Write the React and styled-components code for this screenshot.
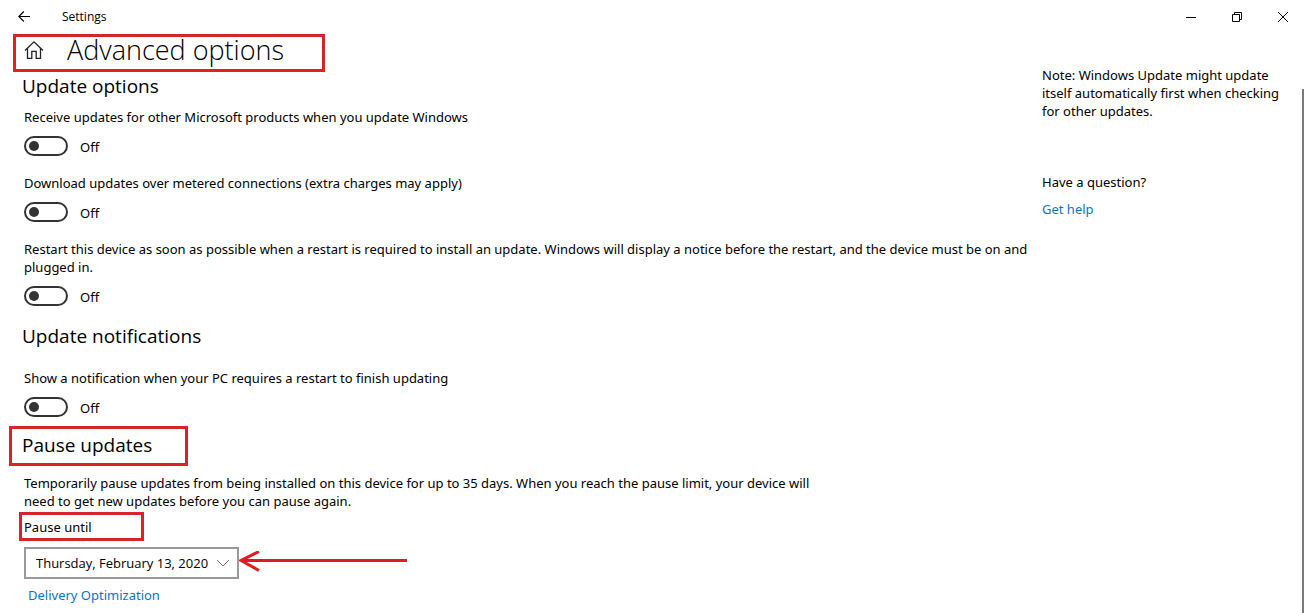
import { useId, useState } from 'react'
import styled, { createGlobalStyle } from 'styled-components'

const GlobalStyle = createGlobalStyle`
    * {
        box-sizing: border-box;
    }

    body {
        margin: 0;
        background-color: #fff;
        color: #000;
        font-family: 'Noto Sans', 'Open Sans', sans-serif;
        font-size: 13px;
        line-height: 18px;
    }
`

const Window = styled.div`
    display: flex;
    flex-direction: column;
    min-height: 100vh;
`

const TitleBar = styled.header`
    display: flex;
    align-items: center;
    flex-shrink: 0;
    height: 34px;
    padding: 0 2px 0 12px;
`

const BarButton = styled.button`
    display: flex;
    align-items: center;
    justify-content: center;
    width: ${props => props.$wide ? '46px' : '24px'};
    height: 32px;
    padding: 0;
    border: none;
    background: none;
    color: #000;
`

const AppName = styled.span`
    flex: 1;
    padding-left: 26px;
    font-family: 'Open Sans', sans-serif;
    font-size: 12px;
`

const Body = styled.div`
    display: flex;
    flex: 1;
`

const Main = styled.main`
    flex: 1;
    min-width: 0;
    padding-left: 24px;
`

const Sidebar = styled.aside`
    width: 260px;
    flex-shrink: 0;
    padding: 32px 12px 0 0;
    margin-left: 7px;
`

const ScrollTrack = styled.div`
    display: flex;
    width: 6px;
    flex-shrink: 0;
    padding: 55px 4px 0 0;
`

const ScrollThumb = styled.div`
    flex: 1;
    background-color: #7a7a7a;
`

const Highlight = styled.div`
    display: flex;
    align-items: center;
    width: ${props => props.$width};
    height: ${props => props.$height};
    margin-left: ${props => props.$outset};
    padding: 0 0 ${props => props.$lift || '0'} ${props => props.$pad};
    border: 3px solid #d9222a;
`

const PageTitle = styled.h1`
    margin: 0 0 0 23px;
    font-family: 'Open Sans', sans-serif;
    font-size: 27px;
    line-height: 32px;
    font-weight: 300;
`

const SectionTitle = styled.h2`
    margin: 0 0 0 -2px;
    font-family: 'Open Sans', sans-serif;
    font-size: 19px;
    line-height: 24px;
    font-weight: 400;
`

const Section = styled.section`
    padding-top: ${props => props.$top};
`

const Options = styled.div`
    display: flex;
    flex-direction: column;
    gap: 18px;
    padding-top: ${props => props.$top};
`

const OptionText = styled.p`
    margin: 0 0 10px;
    white-space: nowrap;
    overflow: hidden;
`

const SwitchRow = styled.div`
    display: flex;
    align-items: center;
    gap: 12px;
    height: 20px;
`

const Switch = styled.input`
    appearance: none;
    display: flex;
    align-items: center;
    width: 44px;
    height: 20px;
    margin: 0;
    padding: 0 3px;
    border: 2px solid #333;
    border-radius: 10px;
    background-color: #fff;

    &::before {
        content: '';
        width: 10px;
        height: 10px;
        border-radius: 50%;
        background-color: #333;
    }

    &:checked {
        justify-content: flex-end;
    }
`

const SwitchState = styled.label`
    padding-top: 2px;
`

const Note = styled.p`
    margin: 0 0 ${props => props.$gap};
`

const Description = styled.p`
    max-width: 810px;
    margin: 8px 0 2px;
`

const Link = styled.a`
    color: #0a74c4;
    text-decoration: none;
`

const PickerRow = styled.div`
    display: flex;
    align-items: center;
    padding: 6px 0 7px;
`

const Picker = styled.div`
    position: relative;
    width: 215px;
`

const Select = styled.select`
    appearance: none;
    display: block;
    width: 100%;
    height: 32px;
    padding: 0 28px 0 10px;
    border: 2px solid #999;
    border-radius: 0;
    background-color: #fff;
    color: #000;
    font-family: 'Open Sans', sans-serif;
    font-size: 13px;
`

const PickerChevron = styled.svg`
    position: absolute;
    top: 12px;
    right: 9px;
    pointer-events: none;
`

const LinkRow = styled.div`
    padding-left: 4px;
`

function Option({ children }) {
    const id = useId()
    const [on, setOn] = useState(false)

    return (
        <div>
            <OptionText id={`${id}-text`}>{children}</OptionText>
            <SwitchRow>
                <Switch
                    type="checkbox"
                    role="switch"
                    id={id}
                    aria-labelledby={`${id}-text`}
                    checked={on}
                    onChange={e => setOn(e.target.checked)}
                />
                <SwitchState htmlFor={id}>{on ? 'On' : 'Off'}</SwitchState>
            </SwitchRow>
        </div>
    )
}

function HomeIcon() {
    return (
        <svg width="20" height="20" viewBox="0 0 20 20" fill="none" stroke="#222" strokeWidth="1.3">
            <path d="M1 10.5 10 1.8l9 8.7" />
            <path d="M3.5 8.5v9.8h4.3v-7h4.4v7h4.3V8.5" />
        </svg>
    )
}

function Arrow() {
    return (
        <svg width="168" height="24" viewBox="0 0 168 24" fill="none" stroke="#e01b24">
            <path d="M2 9.5h166" strokeWidth="3" />
            <path d="M20 .5 2 9.5l18 10" strokeWidth="3" />
        </svg>
    )
}

export default function App() {
    return (
        <Window>
            <GlobalStyle />
            <TitleBar>
                <BarButton aria-label="Back">
                    <svg width="12" height="12" viewBox="0 0 12 12" fill="none" stroke="currentColor" strokeWidth="1.1">
                        <path d="M12 5.5H.8M5.8.5l-5 5 5 5" />
                    </svg>
                </BarButton>
                <AppName>Settings</AppName>
                <BarButton $wide aria-label="Minimize">
                    <svg width="10" height="10" viewBox="0 0 10 10" stroke="currentColor">
                        <path d="M0 5.5h10" />
                    </svg>
                </BarButton>
                <BarButton $wide aria-label="Restore">
                    <svg width="10" height="10" viewBox="0 0 10 10" fill="none" stroke="currentColor">
                        <path d="M.5 2.5h7v7h-7zM2.5 2.5v-2h7v7h-2" />
                    </svg>
                </BarButton>
                <BarButton $wide aria-label="Close">
                    <svg width="10" height="10" viewBox="0 0 10 10" stroke="currentColor">
                        <path d="m0 0 10 10M10 0 0 10" />
                    </svg>
                </BarButton>
            </TitleBar>

            <Body>
                <Main>
                    <Highlight $width="312px" $height="38px" $outset="-11px" $pad="8px" $lift="6px">
                        <HomeIcon />
                        <PageTitle>Advanced options</PageTitle>
                    </Highlight>

                    <Section $top="2px">
                        <SectionTitle>Update options</SectionTitle>
                        <Options $top="10px">
                            <Option>Receive updates for other Microsoft products when you update Windows</Option>
                            <Option>Download updates over metered connections (extra charges may apply)</Option>
                            <Option>
                                Restart this device as soon as possible when a restart is required to install an update. Windows will display a notice before the restart, and the device must be on and
                                <br />
                                plugged in.
                            </Option>
                        </Options>
                    </Section>

                    <Section $top="18px">
                        <SectionTitle>Update notifications</SectionTitle>
                        <Options $top="21px">
                            <Option>Show a notification when your PC requires a restart to finish updating</Option>
                        </Options>
                    </Section>

                    <Section $top="9px">
                        <Highlight $width="179px" $height="40px" $outset="-15px" $pad="12px" $lift="2px">
                            <SectionTitle>Pause updates</SectionTitle>
                        </Highlight>
                        <Description>
                            Temporarily pause updates from being installed on this device for up to 35 days. When you reach the pause limit, your device will need to get new updates before you can pause again.
                        </Description>
                        <Highlight $width="125px" $height="29px" $outset="-5px" $pad="2px">
                            <label htmlFor="pause-until">Pause until</label>
                        </Highlight>
                        <PickerRow>
                            <Picker>
                                <Select id="pause-until">
                                    <option>Thursday, February 13, 2020</option>
                                </Select>
                                <PickerChevron width="14" height="8" viewBox="0 0 14 8" fill="none" stroke="#777">
                                    <path d="m1 1 6 6 6-6" />
                                </PickerChevron>
                            </Picker>
                            <Arrow />
                        </PickerRow>
                        <LinkRow>
                            <Link href="#delivery">Delivery Optimization</Link>
                        </LinkRow>
                    </Section>
                </Main>

                <Sidebar>
                    <Note $gap="53px">
                        Note: Windows Update might update itself automatically first when checking for other updates.
                    </Note>
                    <Note $gap="9px">Have a question?</Note>
                    <Link href="#help">Get help</Link>
                </Sidebar>

                <ScrollTrack>
                    <ScrollThumb />
                </ScrollTrack>
            </Body>
        </Window>
    )
}
